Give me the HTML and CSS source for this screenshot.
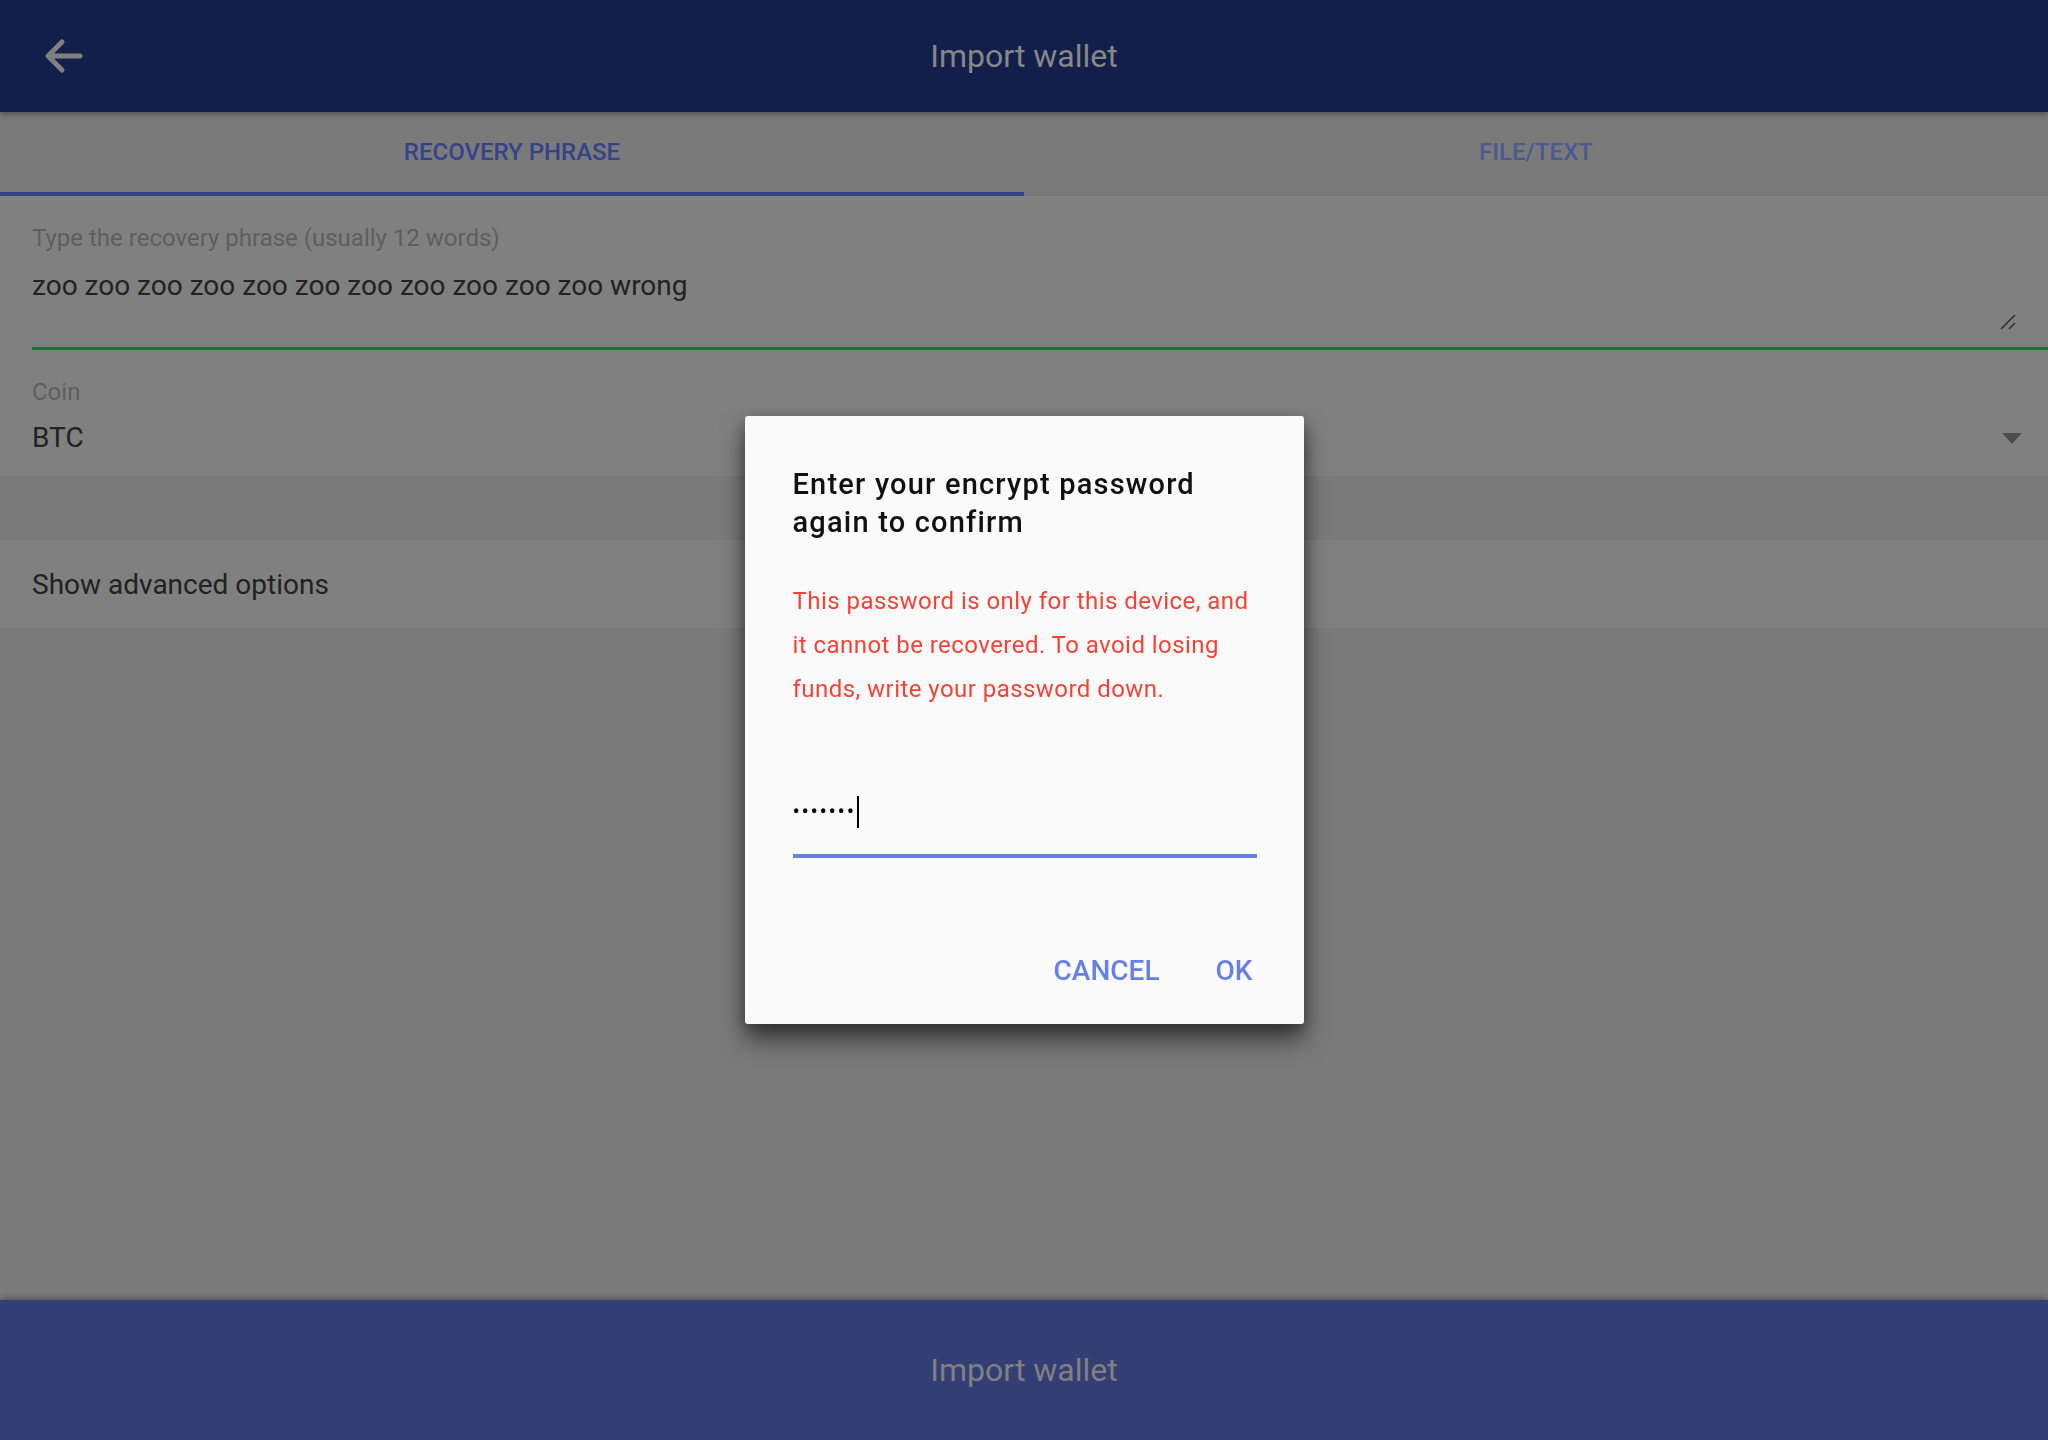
FILE: index.html
```html
<!DOCTYPE html>
<html lang="en">
<head>
<meta charset="utf-8">
<title>Import wallet</title>
<link rel="stylesheet" href="styles.css">
</head>
<body>
<div class="app">
  <header class="topbar">
    <div class="back">
      <svg width="40" height="40" viewBox="0 0 40 40" aria-hidden="true">
        <path d="M36 20H5 M18 6L4 20l14 14" fill="none" stroke="#808080" stroke-width="5" stroke-linecap="round" stroke-linejoin="round"/>
      </svg>
    </div>
    <h1 class="title">Import wallet</h1>
    <div class="spacer"></div>
  </header>

  <nav class="tabs">
    <div class="tab active">Recovery phrase</div>
    <div class="tab">File/Text</div>
  </nav>

  <main class="content">
    <section class="field phrase">
      <div class="label">Type the recovery phrase (usually 12 words)</div>
      <div class="area">
        <div class="value">zoo zoo zoo zoo zoo zoo zoo zoo zoo zoo zoo wrong</div>
        <svg class="resize" width="16" height="16" viewBox="0 0 16 16" aria-hidden="true">
          <path d="M1 15L15 1 M9 15L15 9" stroke="#2e2e2e" stroke-width="1.5" fill="none"/>
        </svg>
      </div>
    </section>

    <section class="field coin">
      <div class="label">Coin</div>
      <div class="select">
        <div class="value">BTC</div>
        <span class="caret"></span>
      </div>
    </section>

    <div class="band"></div>

    <div class="advanced">Show advanced options</div>
  </main>

  <footer class="bottom">Import wallet</footer>
</div>

<div class="modal">
  <div class="dialog">
    <h2 class="dlg-title">Enter your encrypt password again to confirm</h2>
    <p class="dlg-warn">This password is only for this device, and it cannot be recovered. To avoid losing funds, write your password down.</p>
    <div class="pw">
      <span class="dots">•••••••</span><span class="caret-line"></span>
    </div>
    <div class="actions">
      <span class="btn">Cancel</span>
      <span class="btn">OK</span>
    </div>
  </div>
</div>
</body>
</html>
```

FILE: styles.css
```css
* { box-sizing: border-box; }

html, body {
  margin: 0;
  padding: 0;
  height: 100%;
}

body {
  font-family: Roboto, "Noto Sans", "Liberation Sans", sans-serif;
  background: #7a7a7a;
  overflow: hidden;
}

.app {
  display: flex;
  flex-direction: column;
  height: 1440px;
}

.topbar {
  height: 112px;
  flex: 0 0 112px;
  background: #131f4b;
  display: grid;
  grid-template-columns: 128px 1fr 128px;
  align-items: center;
  position: relative;
  z-index: 2;
  box-shadow: 0 2px 6px rgba(0, 0, 0, 0.35);
}

.back {
  display: flex;
  justify-content: center;
  align-items: center;
}

.back svg { display: block; }

.title {
  margin: 0;
  text-align: center;
  font-size: 32px;
  font-weight: 400;
  color: #878787;
  line-height: 40px;
}

.tabs {
  flex: 0 0 84px;
  display: flex;
  background: #7a7a7a;
  border-bottom: 4px solid #767676;
  position: relative;
  z-index: 1;
}

.tab {
  flex: 1;
  display: flex;
  justify-content: center;
  align-items: center;
  text-transform: uppercase;
  font-size: 24px;
  font-weight: 500;
  color: #4c5990;
  margin-bottom: -4px;
  border-bottom: 4px solid transparent;
}

.tab.active {
  color: #34438a;
  border-bottom-color: #34428a;
}

.content {
  flex: 1;
  display: flex;
  flex-direction: column;
  background: #7a7a7a;
}

.field {
  background: #808080;
  padding-left: 32px;
}

.label {
  font-size: 24px;
  line-height: 30px;
  color: #5e5e5e;
}

.value {
  font-size: 28px;
  line-height: 36px;
  color: #222;
}

.phrase {
  padding-top: 27px;
}

.phrase .area {
  position: relative;
  height: 97px;
  padding-top: 15px;
  border-bottom: 3px solid #1c7335;
}

.resize {
  position: absolute;
  right: 32px;
  bottom: 17px;
}

.coin {
  padding-top: 27px;
  padding-bottom: 20px;
}

.select {
  display: flex;
  align-items: center;
  justify-content: space-between;
  padding-right: 26px;
  padding-top: 13px;
}

.caret {
  width: 0;
  height: 0;
  border-left: 10px solid transparent;
  border-right: 10px solid transparent;
  border-top: 11px solid #4d4d4d;
}

.band {
  height: 64px;
  background: #7a7a7a;
}

.advanced {
  height: 88px;
  background: #808080;
  padding-left: 32px;
  display: flex;
  align-items: center;
  font-size: 28px;
  color: #222;
}

.bottom {
  flex: 0 0 140px;
  background: #333e77;
  display: flex;
  justify-content: center;
  align-items: center;
  font-size: 32px;
  color: #808080;
  box-shadow: 0 -2px 6px rgba(0, 0, 0, 0.3);
  position: relative;
}

/* modal */
.modal {
  position: fixed;
  inset: 0;
  display: flex;
  justify-content: center;
  align-items: center;
  z-index: 10;
}

.dialog {
  width: 559px;
  background: #fafafa;
  border-radius: 3px;
  padding: 49px 47px 35px 48px;
  box-shadow: 0 16px 24px rgba(0, 0, 0, 0.5), 0 4px 16px rgba(0, 0, 0, 0.3);
}

.dlg-title {
  margin: 0;
  font-size: 29px;
  line-height: 38px;
  font-weight: 500;
  letter-spacing: 1.2px;
  color: #111;
}

.dlg-warn {
  margin: 38px 0 0;
  font-size: 24px;
  line-height: 44px;
  letter-spacing: 0.45px;
  color: #f44336;
}

.pw {
  margin-top: 81px;
  height: 66px;
  padding-bottom: 22px;
  border-bottom: 4px solid #6680e5;
  display: flex;
  align-items: center;
}

.dots {
  font-size: 22px;
  line-height: 40px;
  letter-spacing: 1.6px;
  color: #000;
}

.caret-line {
  width: 2px;
  height: 32px;
  background: #000;
  margin-left: 1px;
}

.actions {
  margin-top: 95px;
  display: flex;
  justify-content: flex-end;
  gap: 56px;
  padding-right: 4px;
}

.btn {
  font-size: 28px;
  line-height: 36px;
  font-weight: 500;
  text-transform: uppercase;
  color: #6680e5;
}
```
